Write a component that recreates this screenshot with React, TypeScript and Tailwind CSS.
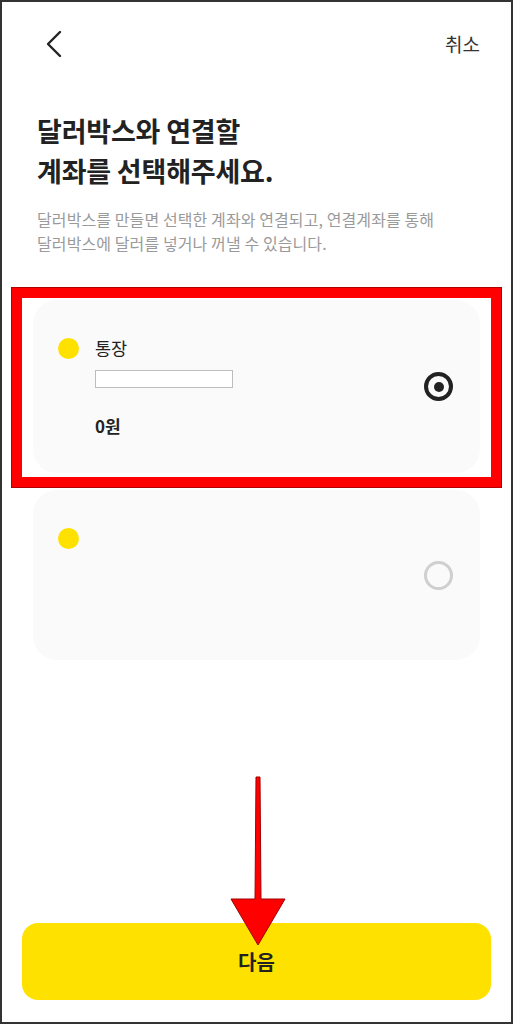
import React from "react";

const font = {
  fontFamily: '"Noto Sans CJK KR", "Noto Sans", sans-serif',
};

function BackIcon() {
  return (
    <svg width="18" height="28" viewBox="0 0 18 28" fill="none">
      <path
        d="M15 2 L3 14 L15 26"
        stroke="#222"
        strokeWidth="2.4"
        strokeLinecap="round"
        strokeLinejoin="round"
      />
    </svg>
  );
}

function Radio({ checked }: { checked: boolean }) {
  if (checked) {
    return (
      <span className="flex h-[29px] w-[29px] items-center justify-center rounded-full border-[4px] border-[#222]">
        <span className="h-[10px] w-[10px] rounded-full bg-[#222]" />
      </span>
    );
  }
  return (
    <span className="block h-[29px] w-[29px] rounded-full border-[3px] border-[#cfcfcf]" />
  );
}

function AccountCard({
  checked,
  name,
  balance,
  highlight,
}: {
  checked: boolean;
  name?: string;
  balance?: string;
  highlight?: boolean;
}) {
  return (
    <div className="relative">
      <div
        className={`flex items-center rounded-[24px] bg-[#fafafa] pl-[25px] pr-[27px] ${
          highlight ? "h-[173px]" : "h-[170px]"
        }`}
      >
        <div className="flex h-full flex-1 gap-[16px] pt-[36px]">
          <span className="mt-[2px] h-[21px] w-[21px] shrink-0 rounded-full bg-[#ffe100]" />
          {name && (
            <div className="flex flex-col">
              <span className="text-[17.5px] leading-[24px] text-[#222]">{name}</span>
              <span className="mt-[10px] block h-[18px] w-[138px] border border-[#bdbdbd] bg-white" />
              <span className="mt-[27px] text-[17px] font-bold leading-[22px] text-[#222]">
                {balance}
              </span>
            </div>
          )}
        </div>
        <Radio checked={checked} />
      </div>
      {highlight && (
        <div className="pointer-events-none absolute -bottom-[14px] -left-[21px] -right-[21px] -top-[12px] border-[10px] border-[#ff0000] shadow-[0_0_0_1px_#b00000]" />
      )}
    </div>
  );
}

export default function App() {
  return (
    <div
      style={font}
      className="relative flex h-[1024px] w-[513px] flex-col overflow-hidden border-2 border-[#333] bg-white"
    >
      {/* header */}
      <div className="flex h-[84px] items-center justify-between pl-[43px] pr-[31px]">
        <BackIcon />
        <span className="text-[19px] text-[#333]">취소</span>
      </div>

      {/* title */}
      <div className="mt-[25px] px-[35px]">
        <h1 className="text-[27px] font-bold leading-[40px] tracking-[-0.2px] text-[#222]">
          달러박스와 연결할
          <br />
          계좌를 선택해주세요.
        </h1>
        <p className="mt-[16px] text-[16px] leading-[24px] tracking-[0.1px] text-[#9a9a9a]">
          달러박스를 만들면 선택한 계좌와 연결되고, 연결계좌를 통해
          <br />
          달러박스에 달러를 넣거나 꺼낼 수 있습니다.
        </p>
      </div>

      {/* accounts */}
      <div className="mt-[45px] flex flex-col gap-[17px] pl-[31px] pr-[31px]">
        <AccountCard checked name="통장" balance="0원" highlight />
        <AccountCard checked={false} />
      </div>

      {/* next button */}
      <div className="mt-auto px-[20px] pb-[22px]">
        <button className="flex h-[77px] w-full items-center justify-center rounded-[16px] bg-[#ffe100] text-[20px] font-bold text-[#222]">
          다음
        </button>
      </div>

      {/* annotation arrow */}
      <svg
        className="pointer-events-none absolute left-[226px] top-[773px]"
        width="60"
        height="172"
        viewBox="0 0 60 172"
      >
        <polygon
          points="28,2 32,2 33,124 57,124 30,170 3,124 27,124"
          fill="#ff0000"
          stroke="#a00000"
          strokeWidth="1"
        />
      </svg>
    </div>
  );
}
